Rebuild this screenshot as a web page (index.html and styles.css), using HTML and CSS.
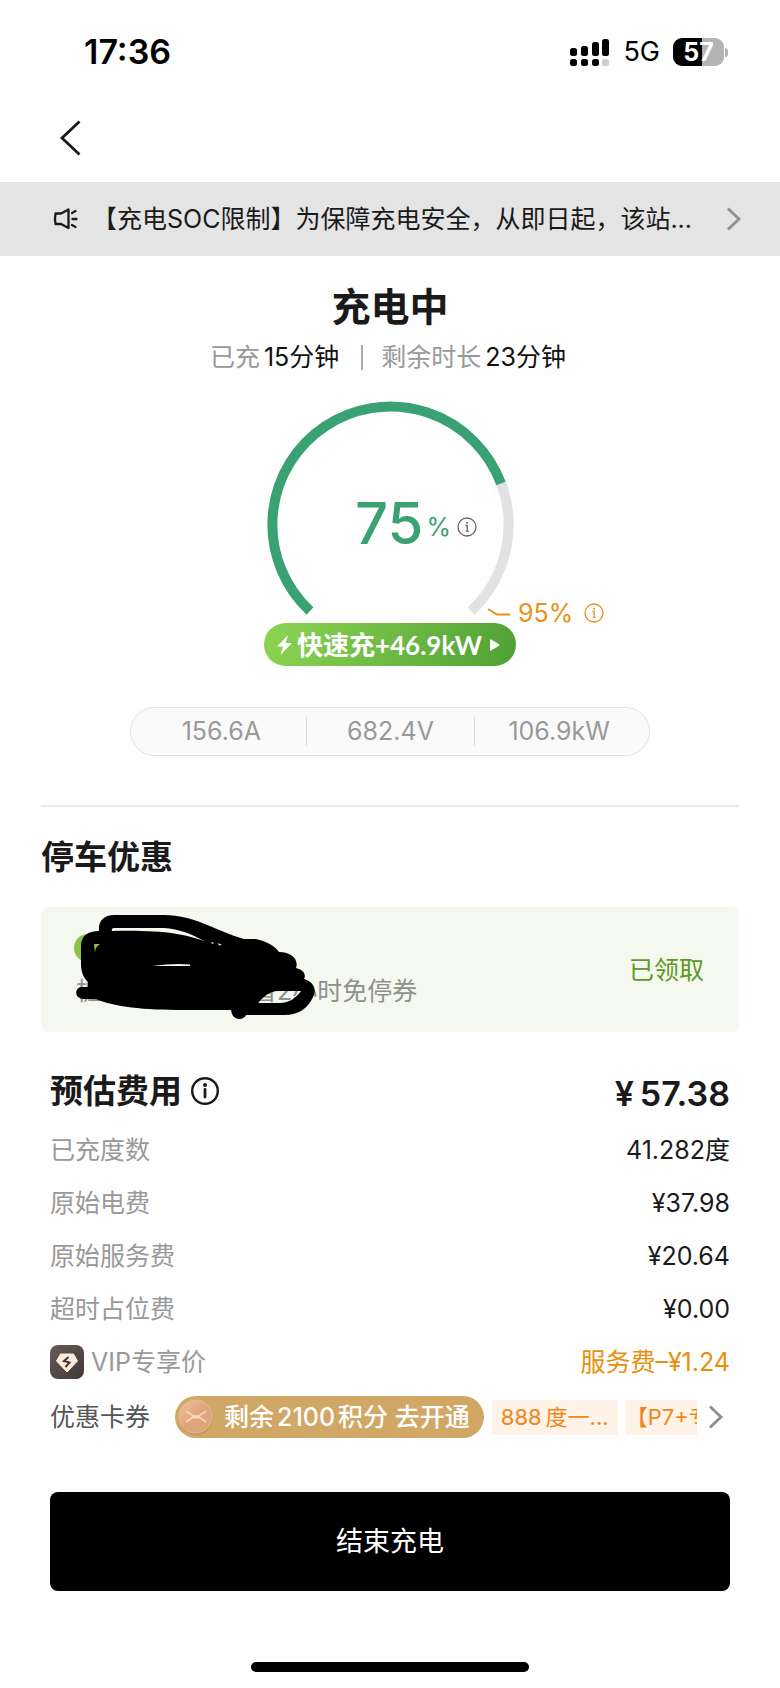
FILE: index.html
```html
<!DOCTYPE html>
<html lang="zh-CN">
<head>
<meta charset="utf-8">
<meta name="viewport" content="width=device-width, initial-scale=1">
<title>充电中</title>
<link rel="stylesheet" href="styles.css">
</head>
<body>
<header class="status">
  <time class="status-time">17:36</time>
  <div class="status-right">
    <svg class="signal" width="40" height="28" viewBox="0 0 40 28" aria-hidden="true">
      <rect x="0" y="10" width="7" height="8" rx="2.5"/>
      <rect x="11" y="8" width="7" height="10" rx="2.5"/>
      <rect x="22" y="4" width="7" height="14" rx="2.5"/>
      <rect x="32" y="1" width="7" height="17" rx="2.5"/>
      <rect x="0" y="21" width="7" height="7" rx="2.5"/>
      <rect x="11" y="21" width="7" height="7" rx="2.5"/>
      <rect x="22" y="21" width="7" height="7" rx="2.5"/>
      <rect x="32" y="21" width="7" height="7" rx="2.5" fill="#ccc"/>
    </svg>
    <span class="network">5G</span>
    <span class="battery"><span class="battery-body">57</span><span class="battery-tip"></span></span>
  </div>
</header>

<nav class="nav">
  <button class="back" type="button" aria-label="返回">
    <svg width="22" height="36" viewBox="0 0 22 36"><path d="M20.500 1.500 3 18l17.500 16.500" fill="none" stroke="#1a1a1a" stroke-width="2.800"/></svg>
  </button>
</nav>

<a class="notice" href="#notice">
  <svg class="speaker" width="26" height="24" viewBox="0 0 26 24" fill="none" stroke="#1a1a1a" stroke-width="2.300" stroke-linecap="round" stroke-linejoin="round">
    <path d="M2.500 6.500h5.500l7.500-4v18.500l-7.500-4H2.500q-1-5.200 0-10.500z"/><path d="M19 6l3.500-2M19.500 12h4M19 18l3.500 2"/>
  </svg>
  <span class="notice-text">【充电SOC限制】为保障充电安全，从即日起，该站...</span>
  <svg class="chevron" width="16" height="24" viewBox="0 0 16 24"><path d="M2 1.500 13 12 2 22.500" fill="none" stroke="#8f8f8f" stroke-width="2.800"/></svg>
</a>

<main class="main">
  <section class="session">
    <h1 class="title">充电中</h1>
    <p class="times">
      <span class="time-item"><span class="muted">已充</span><span>15分钟</span></span>
      <span class="time-sep"></span>
      <span class="time-item"><span class="muted">剩余时长</span><span>23分钟</span></span>
    </p>

    <div class="gauge">
      <svg width="250" height="216" viewBox="0 0 250 216" fill="none" stroke-width="10" aria-hidden="true">
        <path d="M236.200 82.500A118 118 0 0 1 206 210" stroke="#e2e2e2"/>
        <path d="M45 210A118 118 0 1 1 236 82.500" stroke="#3aa272"/>
      </svg>
      <div class="gauge-value">
        <strong>75</strong><span class="percent">%</span>
        <button class="info" type="button" aria-label="电量说明">
          <svg width="20" height="20" viewBox="0 0 20 20" fill="none" stroke="currentColor"><circle cx="10" cy="10" r="9" stroke-width="1.300"/><path d="M8.500 8.500h1.700v6M8.800 14.200h2.800" stroke-width="1.300"/><circle cx="10" cy="5.700" r="1" fill="currentColor" stroke="none"/></svg>
        </button>
      </div>
      <div class="limit">
        <svg width="24" height="10" viewBox="0 0 24 10"><path d="M1 1l9 5.500h13" fill="none" stroke="currentColor" stroke-width="2"/></svg>
        <span>95%</span>
        <button class="info" type="button" aria-label="上限说明">
          <svg width="20" height="20" viewBox="0 0 20 20" fill="none" stroke="currentColor"><circle cx="10" cy="10" r="9" stroke-width="1.300"/><path d="M8.500 8.500h1.700v6M8.800 14.200h2.800" stroke-width="1.300"/><circle cx="10" cy="5.700" r="1" fill="currentColor" stroke="none"/></svg>
        </button>
      </div>
    </div>

    <button class="boost" type="button">
      <svg width="15" height="20" viewBox="0 0 15 20" fill="#fff"><path d="M11 0 0 11.500h6L3.500 20 15 8H8.500z"/></svg>
      <span>快速充+46.9kW</span>
      <svg class="play" width="11" height="12" viewBox="0 0 11 12" fill="#fff"><path d="M1 1.200Q1 0 2.200.500L10 5.200q1 .8 0 1.600L2.200 11.500Q1 12 1 10.800z"/></svg>
    </button>

    <ul class="metrics">
      <li>156.6A</li>
      <li>682.4V</li>
      <li>106.9kW</li>
    </ul>
  </section>

  <section class="parking">
    <h2 class="heading">停车优惠</h2>
    <div class="parking-card">
      <p class="parking-text"><span>桩</span><span>省2小时免停券</span></p>
      <span class="claimed">已领取</span>
      <svg class="scribble" width="244" height="112" viewBox="0 0 244 112" aria-hidden="true">
        <circle cx="14" cy="38" r="14" fill="#8bc34a"/>
        <path fill-rule="evenodd" d="M7 36C7 26 14 21 25 21C24 10 31 5 40 5H90C120 5 140 20 170 29H182C192 31 201 36 205 42C218 42 225 50 222 58C231 60 232 66 230 69C240 72 243 80 239 87C234 98 225 105 210 105H172C170 110 161 111 158 104L157 100H110C70 100 40 97 22 89H10C0 89 0 77 8 77H14V72C9 68 7 60 7 55zM38 21Q37 18 40 18H90C105 19 118 24 130 31C110 24 90 20 38 21zM20 34H26Q21 37 21 43zM78 56Q100 53 116 54.500V56zM184 93C190 86 196 81 204 81H227C222 88 215 93 206 93zM137 32l3 1-2 1zM144 33l4 2-3 .5z"/>
      </svg>
    </div>
  </section>

  <section class="fees">
    <div class="fees-head">
      <h2 class="heading">预估费用</h2>
      <button class="info info-dark" type="button" aria-label="费用说明">
        <svg width="28" height="28" viewBox="0 0 28 28" fill="none" stroke="currentColor"><circle cx="14" cy="14" r="12.800" stroke-width="2.400"/><path d="M14 12.500v7.500" stroke-width="2.800" stroke-linecap="round"/><circle cx="14" cy="8" r="2" fill="currentColor" stroke="none"/></svg>
      </button>
      <strong class="total"><span>¥</span><span>57.38</span></strong>
    </div>
    <dl class="fee-list">
      <div class="fee-row"><dt>已充度数</dt><dd>41.282度</dd></div>
      <div class="fee-row"><dt>原始电费</dt><dd>¥37.98</dd></div>
      <div class="fee-row"><dt>原始服务费</dt><dd>¥20.64</dd></div>
      <div class="fee-row"><dt>超时占位费</dt><dd>¥0.00</dd></div>
      <div class="fee-row">
        <dt>
          <svg class="vip" width="34" height="34" viewBox="0 0 34 34" aria-hidden="true">
            <defs><linearGradient id="vip-bg" x1="0" y1="0" x2="1" y2="1"><stop offset="0" stop-color="#665c59"/><stop offset="1" stop-color="#403837"/></linearGradient></defs>
            <rect width="34" height="34" rx="8" fill="url(#vip-bg)"/>
            <path d="M10.500 9h13L27.500 16 17 27 6.500 16z" fill="#fdeada" stroke="#fdeada" stroke-linejoin="round"/>
            <path d="M18.500 12l-4.500 4 5.500 1.500-4 4.500" fill="none" stroke="#40383a" stroke-width="2"/>
          </svg>
          VIP专享价
        </dt>
        <dd class="discount">服务费–¥1.24</dd>
      </div>
    </dl>
    <div class="coupons">
      <span class="coupons-label">优惠卡券</span>
      <div class="coupon-track">
        <button class="points" type="button">
          <svg width="36" height="36" viewBox="0 0 36 36" aria-hidden="true">
            <defs><linearGradient id="coin" x1="0" y1="0" x2="1" y2="1"><stop offset="0" stop-color="#eec5a0"/><stop offset=".5" stop-color="#e0a47c"/><stop offset="1" stop-color="#d9a67c"/></linearGradient></defs>
            <circle cx="18" cy="19" r="17" fill="#b98a58" opacity=".5"/>
            <circle cx="17.500" cy="17.500" r="16.500" fill="url(#coin)" stroke="#e9b998"/>
            <path d="M8 12l7.500 5h5l7.500-5M8 23l6.500-4.500h7l6.500 4.500" fill="none" stroke="#f8d5b8" stroke-width="1.800"/>
          </svg>
          <span>剩余<span class="number">2100</span>积分 去开通</span>
        </button>
        <span class="tag"><span class="number">888</span>度一...</span>
        <span class="tag tag-tight">【P7+专</span>
      </div>
      <a class="more" href="#coupons" aria-label="更多卡券">
        <svg width="16" height="24" viewBox="0 0 16 24"><path d="M2 1.500 13 12 2 22.500" fill="none" stroke="#8f8f8f" stroke-width="2.800"/></svg>
      </a>
    </div>
    <button class="stop" type="button">结束充电</button>
  </section>
</main>
<div class="home-bar"></div>
</body>
</html>
```

FILE: styles.css
```css
* {
  box-sizing: border-box;
}

body {
  margin: 0;
  background: #fefefe;
  color: #1a1a1a;
  font-family: Inter, "Noto Sans CJK SC", sans-serif;
  font-size: 25px;
  line-height: 36px;
}

h1,
h2,
p,
ul,
dl,
dd {
  margin: 0;
  padding: 0;
}

button {
  padding: 0;
  border: 0;
  background: none;
  color: inherit;
  font: inherit;
}

a {
  color: inherit;
  text-decoration: none;
}

svg {
  display: block;
  flex: none;
}

/* Status bar */
.status {
  display: flex;
  align-items: center;
  justify-content: space-between;
  height: 104px;
  padding: 0 52px 0 84px;
  color: #000;
}

.status-time {
  font-size: 34px;
  font-weight: 600;
}

.status-right {
  display: flex;
  align-items: center;
  gap: 13px;
}

.network {
  font-size: 27px;
}

.battery {
  display: flex;
  align-items: center;
  gap: 1px;
}

.battery-body {
  width: 51px;
  border-radius: 9px;
  background: linear-gradient(90deg, #000 57%, #b4b4b4 57%);
  color: #fff;
  font-size: 25px;
  font-weight: 700;
  line-height: 28px;
  text-align: center;
}

.battery-tip {
  width: 3px;
  height: 9px;
  border-radius: 0 4px 4px 0;
  background: #b4b4b4;
}

.nav {
  height: 78px;
  padding: 16px 59px;
}

/* Announcement */
.notice {
  display: flex;
  align-items: center;
  height: 74px;
  padding: 0 38px 0 53px;
  background: #e4e4e4;
}

.notice-text {
  flex: 1;
  min-width: 0;
  margin: 0 20px 0 13px;
  overflow: hidden;
  text-overflow: ellipsis;
  white-space: nowrap;
}

.main {
  padding: 0 41px;
}

/* Charging session */
.session {
  display: flex;
  flex-direction: column;
  align-items: center;
  padding: 25px 0 49px;
  border-bottom: 2px solid #e8e8e8;
}

.title {
  font-size: 39px;
  font-weight: 700;
  line-height: 52px;
}

.times {
  display: flex;
  align-items: center;
  margin: 6px 0 26px;
  padding-right: 4px;
}

.time-item {
  display: flex;
  gap: 4px;
  color: #111;
}

.time-sep {
  width: 2px;
  height: 25px;
  margin: 0 18px 0 22px;
  background: #aaa;
}

.muted {
  color: #999;
}

.gauge {
  position: relative;
}

.gauge-value {
  position: absolute;
  top: 86px;
  left: 90px;
  display: flex;
  align-items: center;
  color: #3aa272;
}

.gauge-value strong {
  font-size: 58px;
  font-weight: 500;
  line-height: 72px;
}

.percent {
  margin: 8px 6px 0 3px;
}

.info {
  color: #666;
}

.gauge-value .info {
  margin-top: 8px;
}

.limit {
  position: absolute;
  top: 194px;
  left: 222px;
  display: flex;
  align-items: center;
  gap: 7px;
  color: #e8901a;
}

.limit .info {
  margin-left: 4px;
  color: inherit;
}

.boost {
  display: flex;
  align-items: center;
  gap: 5px;
  height: 43px;
  margin: 6px 0 41px;
  padding: 0 16px 0 13px;
  border-radius: 22px;
  background: linear-gradient(110deg, #8dd452, #4fa035);
  color: #fff;
  font-family: Lato, "Noto Sans CJK SC", sans-serif;
  font-size: 26px;
  font-weight: 700;
}

.play {
  margin-left: 2px;
}

.metrics {
  display: grid;
  grid-template-columns: repeat(3, 1fr);
  width: 520px;
  max-width: 100%;
  padding: 9px 6px;
  border: 1px solid #e2e2e2;
  border-radius: 25px;
  background: #fafafa;
  color: #999;
  line-height: 29px;
  list-style: none;
  text-align: center;
}

.metrics li + li {
  border-left: 1px solid #ddd;
}

/* Parking offer */
.heading {
  font-size: 33px;
  font-weight: 700;
  line-height: 44px;
}

.parking .heading {
  margin: 28px 0;
}

.parking-card {
  position: relative;
  display: flex;
  align-items: center;
  justify-content: space-between;
  height: 125px;
  padding: 0 35px;
  border-radius: 8px;
  background: #f4f8ee;
}

.parking-text {
  display: flex;
  gap: 151px;
  padding-top: 42px;
  color: #909090;
}

.claimed {
  color: #5d9a1f;
}

.scribble {
  position: absolute;
  top: 3px;
  left: 33px;
}

/* Estimated cost */
.fees {
  padding: 37px 9px 0;
}

.fees-head {
  display: flex;
  align-items: center;
}

.info-dark {
  margin-left: 9px;
  color: #1a1a1a;
}

.total {
  display: flex;
  gap: 6px;
  margin-left: auto;
  padding-top: 6px;
  font-size: 34px;
  font-weight: 600;
}

.fee-list {
  margin-top: 10px;
}

.fee-row {
  display: flex;
  align-items: center;
  justify-content: space-between;
  height: 53px;
}

.fee-row dt {
  display: flex;
  align-items: center;
  gap: 7px;
  color: #999;
}

.fee-row .discount {
  color: #e8900c;
}

.coupons {
  display: flex;
  align-items: center;
  height: 58px;
  padding-right: 6px;
}

.coupons-label {
  color: #555;
}

.coupon-track {
  display: flex;
  flex: 1;
  align-items: center;
  gap: 8px;
  min-width: 0;
  margin: 0 11px 0 25px;
  overflow: hidden;
  white-space: nowrap;
}

.points {
  display: flex;
  flex: none;
  align-items: center;
  gap: 10px;
  height: 42px;
  padding: 0 14px 0 3px;
  border-radius: 21px;
  background: #d1a765;
  color: #fff;
  font-weight: 500;
}

.points .number {
  margin: 0 3px;
}

.tag {
  flex: none;
  padding: 0 9px;
  background: #fef3e6;
  color: #f0861c;
  font-size: 22px;
  line-height: 35px;
}

.tag .number {
  margin-right: 4px;
}

.tag-tight {
  padding: 0;
}

.stop {
  width: 100%;
  height: 99px;
  margin-top: 46px;
  border-radius: 8px;
  background: #000;
  color: #fff;
  font-size: 27px;
}

.home-bar {
  width: 278px;
  height: 10px;
  margin: 71px auto 16px;
  border-radius: 5px;
  background: #000;
}
```
